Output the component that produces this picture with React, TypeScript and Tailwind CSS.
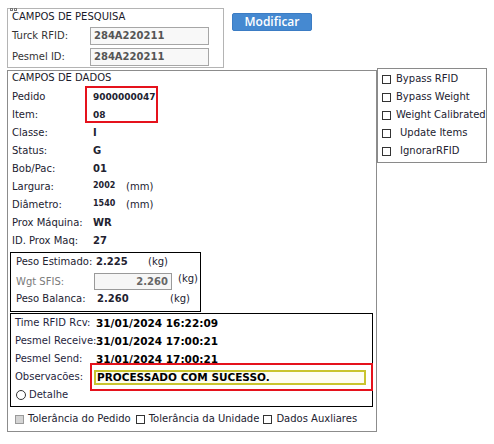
import React from "react";

const font = { fontFamily: '"DejaVu Sans", Verdana, sans-serif' };

function Row({ label, children, labelW = "w-[81px]" }: { label: string; children?: React.ReactNode; labelW?: string }) {
  return (
    <div className="flex h-[18px] items-center">
      <span className={`${labelW} shrink-0 whitespace-nowrap`}>{label}</span>
      {children}
    </div>
  );
}

function Box({ className = "" }: { className?: string }) {
  return <span className={`inline-block h-[9px] w-[9px] shrink-0 border border-[#333] bg-white ${className}`} />;
}

export default function App() {
  const options = [
    { label: "Bypass RFID", gap: "ml-[5px]" },
    { label: "Bypass Weight", gap: "ml-[5px]" },
    { label: "Weight Calibrated", gap: "ml-[5px]" },
    { label: "Update Items", gap: "ml-[9px]" },
    { label: "IgnorarRFID", gap: "ml-[9px]" },
  ];

  const times = [
    { label: "Time RFID Rcv:", value: "31/01/2024 16:22:09" },
    { label: "Pesmel Receive:", value: "31/01/2024 17:00:21" },
    { label: "Pesmel Send:", value: "31/01/2024 17:00:21" },
  ];

  return (
    <div style={font} className="h-[444px] w-[494px] overflow-hidden bg-white text-[10px] leading-[14px] text-[#222230]">
      {/* Pesquisa + botão */}
      <div className="flex pl-[7px] pt-[8px]">
        <div className="relative h-[60px] w-[217px] border border-[#b4b4b4] pl-[4px] pt-[1px]">
          <div className="absolute -top-px left-[2px] flex gap-px">
            <span className="h-[3px] w-[3px] border border-[#777]" />
            <span className="h-[3px] w-[3px] border border-[#777]" />
          </div>
          <div className="h-[14px] text-[#1a1a2a]">CAMPOS DE PESQUISA</div>
          <div className="mt-[3px] flex h-[18px] items-center">
            <span className="w-[78px] text-[#333]">Turck RFID:</span>
            <div className="flex h-[18px] w-[119px] items-center border border-[#a6a6a6] bg-[#f8f8f8] pl-[3px] font-bold text-[#555]">
              284A220211
            </div>
          </div>
          <div className="mt-[3px] flex h-[18px] items-center">
            <span className="w-[78px] text-[#333]">Pesmel ID:</span>
            <div className="flex h-[18px] w-[119px] items-center border border-[#a6a6a6] bg-[#f8f8f8] pl-[3px] font-bold text-[#555]">
              284A220211
            </div>
          </div>
        </div>
        <button
          style={{ fontFamily: '"Open Sans", sans-serif' }}
          className="ml-[8px] mt-[5px] h-[18px] w-[80px] rounded-[2px] border border-[#3b7cc4] bg-[#4589d1] text-[12px] font-semibold leading-[16px] text-white"
        >
          Modificar
        </button>
      </div>

      <div className="flex pl-[7px]">
        {/* Campos de dados */}
        <div className="relative mt-[2px] h-[362px] w-[370px] border border-[#8c8c8c]">
          <div className="h-[14px] pl-[4px] text-[#1a1a2a]">CAMPOS DE DADOS</div>
          <div className="relative mt-[3px] pl-[4px]">
            <Row label="Pedido">
              <span className="text-[9px] font-bold">9000000047</span>
            </Row>
            <Row label="Item:">
              <span className="text-[9px] font-bold">08</span>
            </Row>
            <Row label="Classe:">
              <span className="font-bold">I</span>
            </Row>
            <Row label="Status:">
              <span className="font-bold">G</span>
            </Row>
            <Row label="Bob/Pac:">
              <span className="font-bold">01</span>
            </Row>
            <Row label="Largura:">
              <span className="w-[33px] -translate-y-px text-[8px] font-bold">2002</span>
              <span>(mm)</span>
            </Row>
            <Row label="Diâmetro:">
              <span className="w-[33px] -translate-y-px text-[8px] font-bold">1540</span>
              <span>(mm)</span>
            </Row>
            <Row label="Prox Máquina:">
              <span className="font-bold">WR</span>
            </Row>
            <Row label="ID. Prox Maq:">
              <span className="font-bold">27</span>
            </Row>
            <div className="absolute left-[77px] top-[-2px] h-[37px] w-[73px] border-2 border-[#e5121c]" />
          </div>

          {/* Pesos */}
          <div className="ml-[2px] mt-[2px] h-[60px] w-[191px] border border-black pl-[5px]">
            <div className="flex h-[18px] items-center">
              <span className="w-[80px] whitespace-nowrap">Peso Estimado:</span>
              <span className="w-[52px] font-bold">2.225</span>
              <span>(kg)</span>
            </div>
            <div className="mt-[2px] flex h-[17px]">
              <span className="flex w-[78px] items-center text-[#7a7a7a]">Wgt SFIS:</span>
              <div className="flex h-[17px] w-[78px] items-center justify-end border border-[#9a9a9a] bg-[#f6f6f6] pr-[3px] font-bold text-[#666]">
                2.260
              </div>
              <span className="ml-[6px] mt-[-1px]">(kg)</span>
            </div>
            <div className="flex h-[18px] items-center">
              <span className="w-[81px] whitespace-nowrap">Peso Balanca:</span>
              <span className="w-[73px] font-bold">2.260</span>
              <span>(kg)</span>
            </div>
          </div>

          {/* Tempos */}
          <div className="relative ml-[2px] mt-[1px] h-[94px] w-[363px] border border-black pl-[4px]">
            {times.map((t) => (
              <div key={t.label} className="flex h-[18px] items-center">
                <span className="w-[81px] shrink-0 whitespace-nowrap text-[#1f1f40]">{t.label}</span>
                <span className="text-[10.5px] font-bold text-black">{t.value}</span>
              </div>
            ))}
            <div className="flex h-[18px] items-center">
              <span className="w-[79px] shrink-0 whitespace-nowrap text-[#1f1f40]">Observacões:</span>
              <div className="flex h-[15px] w-[272px] items-center border-2 border-[#c9c42e] bg-[#fdfdf2] pl-px text-[10.5px] font-bold text-black">
                PROCESSADO COM SUCESSO.
              </div>
            </div>
            <div className="flex h-[18px] items-center pl-px">
              <span className="h-[10px] w-[10px] rounded-full border border-[#333] bg-white" />
              <span className="ml-[3px] text-[#1f1f40]">Detalhe</span>
            </div>
            <div className="absolute left-[79px] top-[49px] h-[28px] w-[283px] border-2 border-[#e5121c]" />
          </div>

          <div className="mt-[3px] flex h-[18px] items-center whitespace-nowrap pl-[7px]">
            <span className="inline-block h-[9px] w-[9px] border border-[#9a9a9a] bg-[#d4d4d4]" />
            <span className="ml-[4px]">Tolerância do Pedido</span>
            <Box className="ml-[5px]" />
            <span className="ml-[4px]">Tolerância da Unidade</span>
            <Box className="ml-[4px]" />
            <span className="ml-[4px]">Dados Auxliares</span>
          </div>
        </div>

        {/* Opções */}
        <div className="h-[95px] w-[110px] border border-[#8a8a8a] pl-[4px] pt-px">
          {options.map((o) => (
            <div key={o.label} className="flex h-[18px] items-center">
              <Box />
              <span className={`${o.gap} whitespace-nowrap`}>{o.label}</span>
            </div>
          ))}
        </div>
      </div>
    </div>
  );
}
